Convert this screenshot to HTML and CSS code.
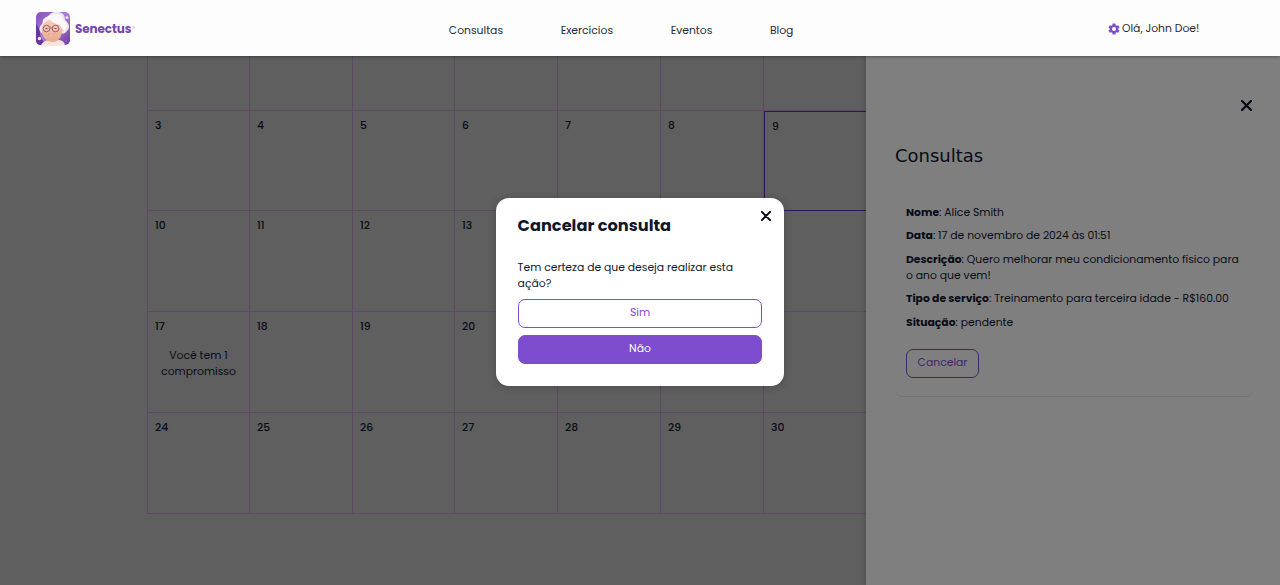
FILE: index.html
```
<!DOCTYPE html>
<html lang="pt-BR">
<head>
<meta charset="utf-8">
<title>Senectus</title>
<link rel="stylesheet" href="styles.css">
</head>
<body>
<header class="header">
  <a class="brand">
    <svg class="brand-mark" width="35" height="35" viewBox="0 0 35 35">
      <defs>
        <linearGradient id="tile" x1="0" y1="0" x2="1" y2="1"><stop offset="0" stop-color="#8750bb"/><stop offset=".5" stop-color="#aa80d5"/><stop offset="1" stop-color="#6d37a4"/></linearGradient>
        <linearGradient id="skin" x1="0" y1="0" x2="0" y2="1"><stop offset="0" stop-color="#f7cdb9"/><stop offset="1" stop-color="#eaa78e"/></linearGradient>
      </defs>
      <rect width="34" height="33" rx="5" fill="url(#tile)"/>
      <path d="M0 12Q5 18 4 23L9 33H5Q0 33 0 28Z" fill="#68359f"/>
      <path d="M4 19Q2 15 7 11Q6 6 12 5Q15-1 23 0Q29 1 29 8Q36 14 31 19Q28 23 25 21L8 21Q5 22 4 19Z" fill="#eee7e9"/>
      <path d="M5 33Q8 28 14 28H22Q28 28 29 33Q24 34 18 34Q10 34 5 33Z" fill="#f8e3da"/>
      <path d="M6 15Q8 9 14 8Q20 10 25 8Q28 14 26 21Q24 30 16 30Q8 29 6 21Z" fill="url(#skin)"/>
      <path d="M6 15Q7 8 13 7Q18 12 24 13Q26 20 30 17Q33 10 27 8Q27 3 21 2Q12 2 7 8Z" fill="#faf7f7"/>
      <g fill="#efc0b0" stroke="#925768" stroke-width=".9"><circle cx="10.500" cy="16.500" r="3.300"/><circle cx="19.500" cy="16.500" r="3.300"/><path d="M13.800 16h2.400"/></g>
      <path d="M9.500 16.500h2M18.500 16.500h2" stroke="#7b5260"/>
      <path d="M12 22Q15 25 19 22Q15 23 12 22Z" fill="#fff" stroke="#c98a7b" stroke-width=".4"/>
      <circle cx="3.500" cy="26.500" r="1.800" fill="#f5edfb"/><circle cx="31" cy="5.500" r="1.500" fill="#eadcf7"/><circle cx="30" cy="29" r="1" fill="#9165bd"/>
    </svg>
    <span class="brand-name">Senectus</span><span class="brand-dot"></span>
  </a>
  <nav class="nav">
    <a>Consultas</a>
    <a>Exercícios</a>
    <a>Eventos</a>
    <a>Blog</a>
  </nav>
  <div class="account">
    <svg class="gear" width="12" height="12" viewBox="0 0 24 24"><path fill="#7d4ccf" fill-rule="evenodd" d="M9.300 1h5.400l.7 3.300 1.800 1 3.200-1 2.700 4.600-2.500 2.200v1.800l2.500 2.200-2.700 4.600-3.200-1-1.800 1-.7 3.300H9.300l-.7-3.300-1.800-1-3.200 1L.9 15.100l2.500-2.200v-1.800L.9 8.900l2.700-4.600 3.200 1 1.800-1zM12 8a4 4 0 1 0 0 8 4 4 0 0 0 0-8z"/></svg>
    <span>Olá, John Doe!</span>
  </div>
</header>
<main class="calendar">
  <div class="day"></div><div class="day"></div><div class="day"></div><div class="day"></div><div class="day"></div><div class="day"></div><div class="day"></div>
  <div class="day">3</div><div class="day">4</div><div class="day">5</div><div class="day">6</div><div class="day">7</div><div class="day">8</div><div class="day today">9</div>
  <div class="day">10</div><div class="day">11</div><div class="day">12</div><div class="day">13</div><div class="day">14</div><div class="day">15</div><div class="day">16</div>
  <div class="day">17<p class="note">Você tem 1<br>compromisso</p></div><div class="day">18</div><div class="day">19</div><div class="day">20</div><div class="day">21</div><div class="day">22</div><div class="day">23</div>
  <div class="day">24</div><div class="day">25</div><div class="day">26</div><div class="day">27</div><div class="day">28</div><div class="day">29</div><div class="day">30</div>
</main>
<aside class="drawer">
  <svg class="drawer-close" width="11" height="11" viewBox="0 0 11 11"><path d="M1 1l9 9M10 1l-9 9"/></svg>
  <h2 class="drawer-title">Consultas</h2>
  <section class="card">
    <p><b>Nome</b>: Alice Smith</p>
    <p><b>Data</b>: 17 de novembro de 2024 às 01:51</p>
    <p><b>Descrição</b>: Quero melhorar meu condicionamento físico para o ano que vem!</p>
    <p><b>Tipo de serviço</b>: Treinamento para terceira idade - R$160.00</p>
    <p><b>Situação</b>: pendente</p>
    <button class="button cancel">Cancelar</button>
  </section>
</aside>
<div class="modal" role="dialog">
  <svg class="modal-close" width="10" height="10" viewBox="0 0 11 11"><path d="M1 1l9 9M10 1l-9 9"/></svg>
  <h1 class="modal-title">Cancelar consulta</h1>
  <p class="question">Tem certeza de que deseja realizar esta ação?</p>
  <button class="button">Sim</button>
  <button class="button primary">Não</button>
</div>
</body>
</html>
```
FILE: styles.css
```
* { box-sizing: border-box; }
body { margin: 0; height: 585px; overflow: hidden; background: #5f5f5f; color: #0f172a; font: 10.8px/16.2px Poppins, Inter, sans-serif; }
h1, h2, p { margin: 0; }
.header { position: relative; z-index: 3; height: 56px; display: flex; background: #fdfdfd; box-shadow: 0 1px 3px #0005; }
.brand { width: 448.8px; padding: 12px 0 0 36px; display: flex; }
.brand-name { margin: 9px 0 0 4px; color: #7445b3; font-size: 12px; font-weight: 700; letter-spacing: -.1px; }
.brand-dot { width: 3px; height: 3px; margin: 14px 0 0 1px; border-radius: 50%; background: #e2d5f5; }
.nav { width: 658.4px; padding-top: 23px; display: flex; gap: 57.6px; color: #1e293b; }
.account { padding-top: 21px; display: flex; gap: 2.4px; color: #1e293b; }
.gear { margin: 2px 0 0 .4px; }
.calendar { width: 722px; margin-left: 147px; display: grid; grid-template-columns: 102px 103px 102px 103px 103px 103px 105px; grid-template-rows: 55px 100px 101px 101px 101px; border-left: 1px solid #5f4865; }
.day { padding: 7px 7px 0; border-right: 1px solid #5f4865; border-bottom: 1px solid #5f4865; color: #080c16; font-weight: 500; }
.today { border: 1px solid #35145f; }
.note { margin-top: 13px; text-align: center; font-weight: 400; }
.drawer { position: absolute; z-index: 1; top: 56px; right: 0; width: 414px; height: 529px; padding: 44px 29px 0; display: flex; flex-direction: column; background: #7f7f7f; color: #080c16; box-shadow: -1px 0 5px #0003; }
.drawer-close { align-self: flex-end; margin-right: -1px; }
.drawer-close, .modal-close { fill: none; stroke: #080c16; stroke-width: 2.2; stroke-linecap: round; }
.drawer-title { margin-top: 33px; font: 400 18px/24px "DejaVu Sans", sans-serif; }
.card { height: 200px; margin: 28px -1px 0 1px; padding: 9px 10px 0; display: flex; flex-direction: column; gap: 7.2px; border-radius: 6px; box-shadow: 0 1px 1px #0000001a; }
.button { flex: none; height: 29px; padding: 0 0 1px; border: 1px solid #7d4ccf; border-radius: 7px; background: transparent; color: #7d4ccf; font: inherit; }
.cancel { width: 73px; margin-top: 11px; border-color: #3f2668; color: #3f2668; }
.modal { position: absolute; z-index: 2; left: 496px; top: 198px; width: 288px; height: 188px; padding: 16px 22px; display: flex; flex-direction: column; border-radius: 13px; background: #fff; box-shadow: 0 1px 8px #0003; }
.modal-close { position: absolute; top: 13px; right: 13px; }
.modal-title { margin-left: -.4px; font-size: 16.2px; line-height: 24px; font-weight: 700; }
.question { height: 32px; margin: 22px 0 7px -.4px; }
.primary { margin-top: 7px; background: #7d4ccf; color: #fff; }
```
